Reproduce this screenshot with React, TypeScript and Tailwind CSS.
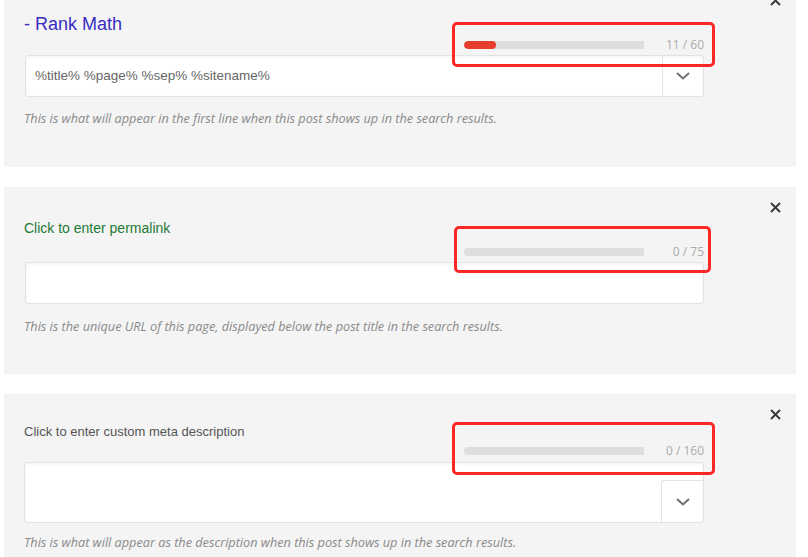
import React from "react";

function Chevron() {
  return (
    <svg width="14" height="8" viewBox="0 0 14 8" fill="none">
      <path d="M1 1 L7 6.5 L13 1" stroke="#6f6f6f" strokeWidth="2" />
    </svg>
  );
}

function CloseX() {
  return (
    <svg width="11" height="11" viewBox="0 0 11 11">
      <path d="M1 1 L10 10 M10 1 L1 10" stroke="#3a3a3a" strokeWidth="2" />
    </svg>
  );
}

function Meter({ fill, count }: { fill: number; count: string }) {
  return (
    <div className="flex items-center justify-end w-[679px] ml-[21px] h-4">
      <div className="w-[180px] h-[8px] bg-[#dedede] rounded-l-[4px] overflow-hidden">
        {fill > 0 && <div className="h-full bg-[#e53e2c] rounded-[4px]" style={{ width: fill }} />}
      </div>
      <span className="w-[60px] text-right text-[12px] text-[#ababab] font-['Open_Sans',sans-serif]">
        {count}
      </span>
    </div>
  );
}

function Help({ children }: { children: React.ReactNode }) {
  return (
    <p className="ml-[20px] text-[12.7px] leading-[18px] italic text-[#8a8a8a] font-['Open_Sans',sans-serif]">
      {children}
    </p>
  );
}

export default function App() {
  return (
    <div className="w-[808px] h-[557px] overflow-hidden bg-white font-['Liberation_Sans',Arial,sans-serif]">
      <div className="flex flex-col gap-5 ml-[4px] w-[792px] mt-[-20px]">
        {/* title */}
        <section className="relative h-[187px] bg-[#f4f4f4] pt-[33px]">
          <div className="absolute top-[15px] right-[15px]"><CloseX /></div>
          <h3 className="ml-[20px] text-[18px] leading-[22px] text-[#3a2dc2]">- Rank Math</h3>
          <div className="mt-[2px]"><Meter fill={32} count="11 / 60" /></div>
          <div className="mt-[2px] ml-[21px] w-[679px] h-[42px] flex bg-white border border-[#e3e3e3] rounded-[3px] shadow-[inset_0_1px_3px_rgba(0,0,0,0.06)]">
            <div className="flex-1 flex items-center pl-[9px] text-[13.5px] text-[#666]">%title% %page% %sep% %sitename%</div>
            <div className="w-[41px] flex items-center justify-center border-l border-[#e3e3e3]"><Chevron /></div>
          </div>
          <div className="mt-[12px]">
            <Help>This is what will appear in the first line when this post shows up in the search results.</Help>
          </div>
          <div className="absolute left-[448px] top-[42px] w-[263px] h-[45px] border-[3px] border-[#ff2626] rounded-[5px]" />
        </section>

        {/* permalink */}
        <section className="relative h-[187px] bg-[#f4f4f4] pt-[33px]">
          <div className="absolute top-[15px] right-[15px]"><CloseX /></div>
          <h3 className="ml-[20px] text-[14px] leading-[16px] text-[#1d7b35]">Click to enter permalink</h3>
          <div className="mt-[8px]"><Meter fill={0} count="0 / 75" /></div>
          <div className="mt-[2px] ml-[21px] w-[679px] h-[42px] bg-white border border-[#e3e3e3] rounded-[3px] shadow-[inset_0_1px_3px_rgba(0,0,0,0.06)]" />
          <div className="mt-[13px]">
            <Help>This is the unique URL of this page, displayed below the post title in the search results.</Help>
          </div>
          <div className="absolute left-[450px] top-[39px] w-[257px] h-[47px] border-[3px] border-[#ff2626] rounded-[5px]" />
        </section>

        {/* description */}
        <section className="relative h-[187px] bg-[#f4f4f4] pt-[30px]">
          <div className="absolute top-[15px] right-[15px]"><CloseX /></div>
          <h3 className="ml-[20px] text-[13px] leading-[16px] text-[#555]">Click to enter custom meta description</h3>
          <div className="mt-[3px]"><Meter fill={0} count="0 / 160" /></div>
          <div className="mt-[3px] ml-[20px] w-[680px] h-[61px] shrink-0 flex items-end justify-end bg-white border border-[#e3e3e3] rounded-[3px] shadow-[inset_0_1px_3px_rgba(0,0,0,0.06)]">
            <div className="w-[42px] h-[42px] flex items-center justify-center border-t border-l border-[#e3e3e3] rounded-tl-[3px]"><Chevron /></div>
          </div>
          <div className="mt-[10px]">
            <Help>This is what will appear as the description when this post shows up in the search results.</Help>
          </div>
          <div className="absolute left-[448px] top-[28px] w-[263px] h-[53px] border-[3px] border-[#ff2626] rounded-[5px]" />
        </section>
      </div>
    </div>
  );
}
